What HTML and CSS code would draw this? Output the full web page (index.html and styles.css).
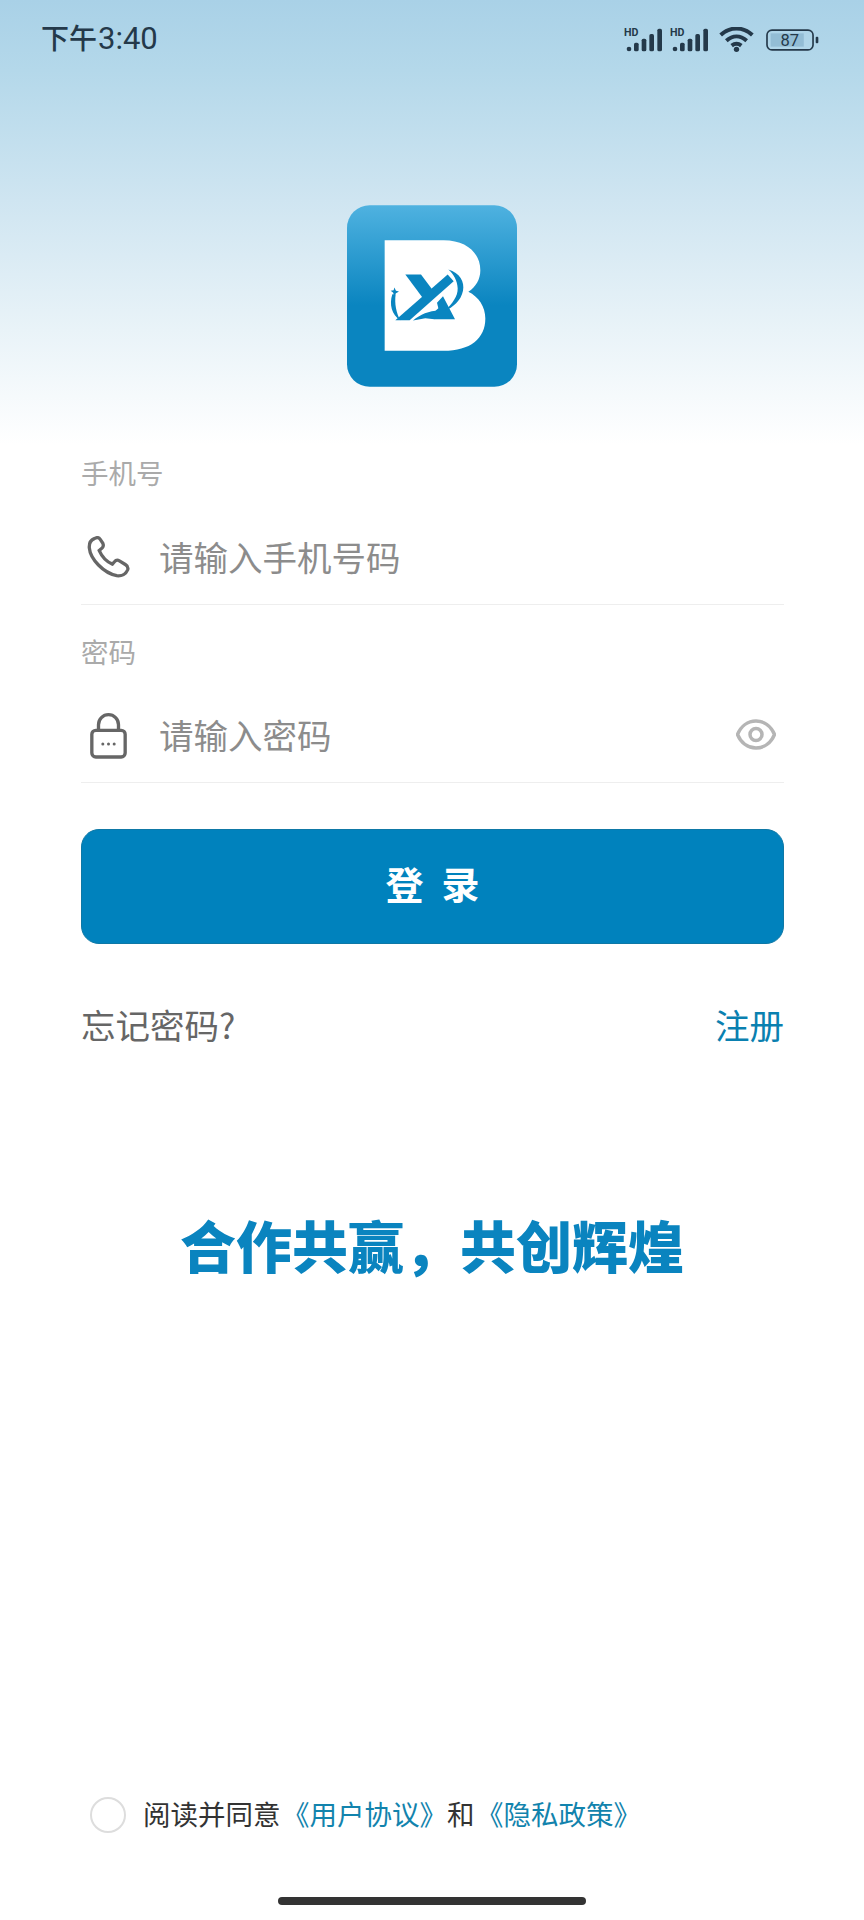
FILE: index.html
```html
<!DOCTYPE html>
<html lang="zh-CN">
<head>
<meta charset="utf-8">
<title>登录</title>
<link rel="stylesheet" href="styles.css">
</head>
<body>
<main class="page">
  <header class="status">
    <span class="time">下午<span class="clock">3:40</span></span>
    <div class="status-icons">
      <svg class="sig" viewBox="0 0 117 72"><text x="0" y="24" class="hd">HD</text><circle cx="15" cy="63" r="7" class="ink"/><rect x="30" y="44" width="14" height="26" rx="5" class="ink"/><rect x="53" y="32" width="14" height="38" rx="5" class="ink"/><rect x="76" y="18" width="14" height="52" rx="5" class="ink"/><rect x="100" y="2" width="14" height="68" rx="5" class="ink"/></svg>
      <svg class="sig" viewBox="0 0 117 72"><text x="0" y="24" class="hd">HD</text><circle cx="15" cy="63" r="7" class="ink"/><rect x="30" y="44" width="14" height="26" rx="5" class="ink"/><rect x="53" y="32" width="14" height="38" rx="5" class="ink"/><rect x="76" y="18" width="14" height="52" rx="5" class="ink"/><rect x="100" y="2" width="14" height="68" rx="5" class="ink"/></svg>
      <svg class="wifi" viewBox="0 0 105 75"><path d="M5 24C34-2 71-2 100 24" class="wave"/><path d="M22 41C41 24 64 24 83 41" class="wave"/><path d="M38 56C47 49 58 49 67 56" class="wave"/><circle cx="52.500" cy="67" r="8" class="ink"/></svg>
      <svg class="battery" viewBox="0 0 160 66"><rect x="3" y="3" width="139" height="60" rx="15" class="bat-line"/><rect x="14" y="13" width="100" height="40" class="bat-fill"/><rect x="150" y="23" width="8" height="20" rx="3" class="ink"/><text x="72" y="50" class="bat-text">87</text></svg>
    </div>
  </header>

  <svg class="logo" viewBox="50 45 510 545" role="img" aria-label="logo">
    <defs><linearGradient id="lg" x1="0" y1="0" x2="0" y2="1"><stop offset="0" stop-color="#4fb2e0"/><stop offset=".55" stop-color="#0a85c0"/><stop offset="1" stop-color="#0a85c0"/></linearGradient></defs>
    <rect x="50" y="45" width="510" height="545" rx="68" fill="url(#lg)"/>
    <path d="M163 150H340C410 150 450 190 450 240C450 268 436 290 414 305C445 320 465 350 465 385C465 445 420 482 340 482H163Z" fill="#fff"/>
    <g fill="#0a85c0">
      <path d="M225 253H272L312 306L283 331Z"/>
      <path d="M352 253L370 273L238 390H195Z"/>
      <path d="M338 318L374 387H312L300 376L324 354L320 338Z"/>
      <path d="M248 391C270 372 295 362 328 360L312 387L285 384Z"/>
      <path d="M354 238C388 248 404 275 398 302C392 332 368 352 343 362C366 340 383 318 382 294C381 272 370 252 354 238Z"/>
      <path d="M186 312C176 342 184 374 210 390C198 368 192 340 196 312Z"/>
      <path d="M192 292L197 302L206 304L197 309L192 317L188 307L181 302L190 300Z"/>
    </g>
  </svg>

  <form class="form">
    <div class="label">手机号</div>
    <div class="field">
      <span class="slot"><svg class="i-phone" viewBox="50 260 130 127"><path d="M72 268C62 272 56 282 57 296C60 330 100 372 140 380C155 382 168 375 173 362C175 355 172 350 167 347L148 335C143 332 137 333 133 338L127 345C110 338 95 322 87 304L96 296C100 292 100 287 98 282L90 270C86 264 79 264 72 268Z"/></svg></span>
      <span class="placeholder">请输入手机号码</span>
    </div>
    <div class="label label-second">密码</div>
    <div class="field">
      <span class="slot"><svg class="i-lock" viewBox="60 790 110 138"><path d="M85 842V825A30 30 0 0 1 145 825V842"/><rect x="65" y="842" width="100" height="80" rx="12"/><circle cx="98" cy="883" r="4.500" class="dot"/><circle cx="115" cy="883" r="4.500" class="dot"/><circle cx="132" cy="883" r="4.500" class="dot"/></svg></span>
      <span class="placeholder">请输入密码</span>
      <svg class="i-eye" viewBox="0 0 40 31"><path d="M1.500 15.500C5 7 12 2 20 2S35 7 38.500 15.500C35 24 28 29 20 29S5 24 1.500 15.500Z"/><circle cx="20" cy="15.500" r="6"/></svg>
    </div>
    <button class="submit" type="button">登录</button>
    <div class="links">
      <span class="forgot">忘记密码?</span>
      <span class="register">注册</span>
    </div>
  </form>

  <h1 class="slogan">合作共赢，共创辉煌</h1>

  <footer class="agree">
    <span class="radio"></span>
    <span class="agree-text">阅读并同意<a class="doc">《用户协议》</a>和<a class="doc">《隐私政策》</a></span>
  </footer>
  <div class="home"></div>
</main>
</body>
</html>
```
FILE: styles.css
```css
* { box-sizing: border-box; }
html, body { margin: 0; padding: 0; }
body {
  font-family: "Noto Sans CJK SC", "Noto Sans", sans-serif;
  background: #fff;
}
.page {
  width: 864px;
  height: 1920px;
  display: flex;
  flex-direction: column;
  overflow: hidden;
  background: linear-gradient(180deg, #a9d1e7 0, #b4d8ea 70px, #cfe5f1 200px, #e9f3f8 330px, #ffffff 445px) no-repeat;
}
.status {
  height: 79px;
  display: flex;
  align-items: center;
  justify-content: space-between;
  padding: 0 45px 0 41px;
  flex: none;
}
.time {
  font-family: "Roboto", "Noto Sans CJK SC", sans-serif;
  font-size: 28px;
  line-height: 40px;
  font-weight: 500;
  color: #24394a;
}
.clock { font-size: 31px; font-weight: 400; margin-left: 1px; }
.status-icons { display: flex; align-items: center; }
.ink { fill: #24394a; }
.sig { width: 39px; height: 24px; margin-right: 7px; overflow: visible; }
.hd { font: 700 32px "Roboto", sans-serif; fill: #24394a; }
.wifi { width: 35px; height: 25px; margin: 0 12px 0 3px; }
.wave { fill: none; stroke: #24394a; stroke-width: 12; }
.battery { width: 53px; height: 22px; overflow: visible; }
.bat-line { fill: none; stroke: #24394a; stroke-width: 5; }
.bat-fill { fill: #93bdd5; }
.bat-text { font: 400 50px "Roboto", sans-serif; fill: #24394a; text-anchor: middle; }
.logo {
  flex: none;
  width: 170px;
  height: 182px;
  margin: 126px 0 0 347px;
}
.form { padding: 0 80px 0 81px; flex: none; }
.label {
  margin: 65px 0 1px;
  font-size: 27.500px;
  line-height: 40px;
  color: #aaaaaa;
}
.label-second { margin: 26px 0 0; }
.field {
  height: 112px;
  padding-top: 16px;
  display: flex;
  align-items: center;
  border-bottom: 1px solid #eeeeee;
}
.slot { width: 55px; margin-right: 23px; display: flex; justify-content: center; flex: none; }
.i-phone { width: 43px; height: 42px; }
.i-lock { width: 37px; height: 46px; position: relative; top: 1px; }
.i-phone path, .i-lock path, .i-lock rect { fill: none; stroke: #666666; stroke-width: 10; }
.i-lock .dot { fill: #666666; }
.placeholder { font-size: 34.500px; line-height: 48px; margin-bottom: 2px; color: #8c8c8c; }
.i-eye { width: 40px; height: 31px; margin: 0 8px 0 auto; }
.i-eye path, .i-eye circle { fill: none; stroke: #b5b5b5; stroke-width: 3.500; }
.submit {
  display: block;
  width: 100%;
  height: 115px;
  margin-top: 46px;
  padding: 0 0 8px 18px;
  border: 1px solid #0e78a6;
  border-radius: 18px;
  background: #0082bd;
  color: #ffffff;
  font-family: inherit;
  font-size: 38px;
  font-weight: 700;
  letter-spacing: 18px;
}
.links {
  margin-top: 56px;
  display: flex;
  justify-content: space-between;
  font-size: 34.500px;
  line-height: 48px;
}
.forgot { color: #666666; }
.register { color: #0a80b0; }
.slogan {
  flex: none;
  margin: 156px 0 0;
  text-align: center;
  font-size: 56px;
  line-height: 80px;
  font-weight: 900;
  color: #0a84bf;
}
.agree {
  margin-top: auto;
  height: 40px;
  padding-left: 90px;
  display: flex;
  align-items: center;
  flex: none;
}
.radio {
  width: 36px;
  height: 36px;
  margin-right: 17px;
  border: 2px solid #dddddd;
  border-radius: 50%;
  flex: none;
}
.agree-text { font-size: 27.500px; line-height: 40px; margin-bottom: 4px; color: #333333; }
.doc { color: #1283ad; margin-left: 1.500px; }
.home {
  flex: none;
  width: 308px;
  height: 8px;
  margin: 62px 0 15px 278px;
  border-radius: 4px;
  background: #333333;
}
```
